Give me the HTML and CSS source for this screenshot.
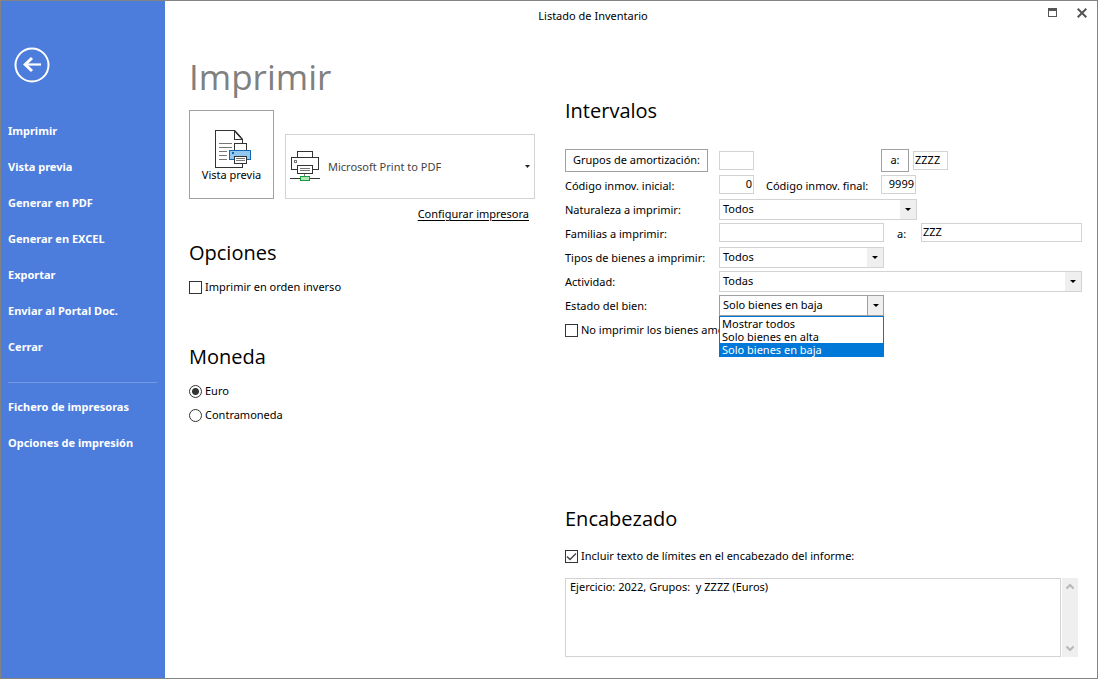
FILE: index.html
```html
<!DOCTYPE html>
<html lang="es">
<head>
<meta charset="utf-8">
<title>Listado de Inventario</title>
<link rel="stylesheet" href="styles.css">
</head>
<body>
<div class="window">
  <nav class="sidebar">
    <button class="back" aria-label="Volver">
      <svg width="36" height="36" viewBox="0 0 36 36" fill="none" stroke="#fff"><circle cx="18" cy="18" r="16.5" stroke-width="2"/><path d="M27 17.5H11" stroke-width="2.2"/><path d="M18 11l-6.8 6.5L18 24" stroke-width="3"/></svg>
    </button>
    <a class="nav-item" href="#">Imprimir</a>
    <a class="nav-item" href="#">Vista previa</a>
    <a class="nav-item" href="#">Generar en PDF</a>
    <a class="nav-item" href="#">Generar en EXCEL</a>
    <a class="nav-item" href="#">Exportar</a>
    <a class="nav-item" href="#">Enviar al Portal Doc.</a>
    <a class="nav-item" href="#">Cerrar</a>
    <hr class="nav-line">
    <a class="nav-item" href="#">Fichero de impresoras</a>
    <a class="nav-item" href="#">Opciones de impresión</a>
  </nav>
  <main class="main">
    <header class="titlebar">
      <span class="caption">Listado de Inventario</span>
      <div class="window-buttons">
        <button class="plain" aria-label="Maximizar"><svg width="9" height="9" viewBox="0 0 9 9" shape-rendering="crispEdges"><path d="M0 0h9v9H0zM1 3v5h7V3z" fill="#555" fill-rule="evenodd"/></svg></button>
        <button class="plain" aria-label="Cerrar ventana"><svg width="10" height="10" viewBox="0 0 10 10"><path d="M.7.7l8.6 8.6M9.3.7L.7 9.3" stroke="#555" stroke-width="2"/></svg></button>
      </div>
    </header>
    <div class="content">
      <section class="left">
        <h1 class="page-title">Imprimir</h1>
        <div class="printer-row">
          <button class="preview">
            <svg width="37" height="38" viewBox="0 0 37 38" fill="none" shape-rendering="crispEdges">
              <path d="M.5.5H19.5L27.5 9.500V37.500H.5z" fill="#fff" stroke="#333"/>
              <path d="M19.500.5V9.500H27.500" stroke="#333"/><path d="M19.500.5L27.500 9.500" stroke="#333" stroke-width="1.500" shape-rendering="auto"/>
              <path d="M4 13.500h13M4 17.500h13M4 21.500h8M4 25.500h8M4 29.500h8" stroke="#777"/>
              <path d="M19.500 13.500h12v7h-12z" fill="#fff" stroke="#333"/>
              <path d="M14.500 20.500h21v9h-21z" fill="#92c8f0" stroke="#1267b4"/>
              <path d="M17 22h2v2h-2z" fill="#1267b4"/>
              <path d="M19.500 26.500h12v7h-12z" fill="#fff" stroke="#333"/>
              <path d="M21 28.500h9M21 30.500h9" stroke="#777"/>
            </svg>
            <span>Vista previa</span>
          </button>
          <button class="printer">
            <svg width="30" height="31" viewBox="0 0 30 31" fill="none" shape-rendering="crispEdges">
              <path d="M7.500 7V.5h15V7" stroke="#333"/>
              <path d="M7 18.500H1.500v-12h27v12H23" stroke="#333"/>
              <path d="M4.500 9.500h2v2h-2z" stroke="#777"/>
              <path d="M7.500 14.500h15v8h-15z" fill="#fff" stroke="#333"/>
              <path d="M10 17.500h10M10 19.500h10" stroke="#777"/>
              <path d="M14.500 23v2" stroke="#777"/>
              <path d="M0 27.500h10M20 27.500h10" stroke="#333"/>
              <path d="M10.500 25.500h9v4h-9z" fill="#b3e3bd" stroke="#12a03c"/>
            </svg>
            <span class="printer-name">Microsoft Print to PDF</span>
            <svg width="5" height="3" viewBox="0 0 5 3"><path d="M0 0h5L2.500 3z" fill="#222"/></svg>
          </button>
        </div>
        <a class="configure" href="#">Configurar impresora</a>
        <h2 class="heading">Opciones</h2>
        <label class="check"><input type="checkbox" class="box">Imprimir en orden inverso</label>
        <h2 class="heading currency">Moneda</h2>
        <label class="check"><input type="radio" name="moneda" class="box round" checked>Euro</label>
        <label class="check"><input type="radio" name="moneda" class="box round">Contramoneda</label>
      </section>
      <section class="right">
        <h2 class="heading">Intervalos</h2>
        <div class="fields">
          <div class="row">
            <div class="group-cell"><button class="range">Grupos de amortización:</button></div>
            <input class="field short" aria-label="Grupo inicial">
            <button class="range to">a:</button>
            <input class="field short" value="ZZZZ" aria-label="Grupo final">
          </div>
          <div class="row">
            <label class="label-cell" for="ini">Código inmov. inicial:</label>
            <input class="field short number" id="ini" value="0">
            <label class="final-label" for="fin">Código inmov. final:</label>
            <input class="field short number" id="fin" value="9999">
          </div>
          <div class="row">
            <label class="label-cell" for="nat">Naturaleza a imprimir:</label>
            <div class="combo wide"><select id="nat"><option>Todos</option></select><span class="arrow"></span></div>
          </div>
          <div class="row">
            <label class="label-cell" for="fam">Familias a imprimir:</label>
            <input class="field medium" id="fam">
            <label class="family-to" for="famto">a:</label>
            <input class="field grow" id="famto" value="ZZZ">
          </div>
          <div class="row">
            <label class="label-cell" for="tipo">Tipos de bienes a imprimir:</label>
            <div class="combo medium"><select id="tipo"><option>Todos</option></select><span class="arrow"></span></div>
          </div>
          <div class="row">
            <label class="label-cell" for="act">Actividad:</label>
            <div class="combo grow"><select id="act"><option>Todas</option></select><span class="arrow"></span></div>
          </div>
          <div class="row">
            <label class="label-cell" for="est">Estado del bien:</label>
            <div class="combo medium open"><select id="est"><option>Solo bienes en baja</option></select><span class="arrow"></span>
              <ul class="list" role="listbox">
                <li role="option">Mostrar todos</li>
                <li role="option">Solo bienes en alta</li>
                <li role="option" class="selected" aria-selected="true">Solo bienes en baja</li>
              </ul>
            </div>
          </div>
          <label class="check"><input type="checkbox" class="box">No imprimir los bienes amo</label>
        </div>
        <div class="report">
          <h2 class="heading">Encabezado</h2>
          <label class="check"><input type="checkbox" class="box" checked>Incluir texto de límites en el encabezado del informe:</label>
          <div class="memo">
            <textarea class="memo-text" aria-label="Encabezado">Ejercicio: 2022, Grupos:  y ZZZZ (Euros)</textarea>
            <div class="scroll">
              <button class="plain" aria-label="Subir"><svg width="8" height="7" viewBox="0 0 8 7"><path d="M.5 5.500L4 2l3.500 3.500" fill="none" stroke="#b8b8b8" stroke-width="2"/></svg></button>
              <button class="plain" aria-label="Bajar"><svg width="8" height="7" viewBox="0 0 8 7"><path d="M.5 1.500L4 5l3.500-3.500" fill="none" stroke="#b8b8b8" stroke-width="2"/></svg></button>
            </div>
          </div>
        </div>
      </section>
    </div>
  </main>
</div>
</body>
</html>
```
FILE: styles.css
```css
* { box-sizing: border-box; }
body { margin: 0; }
body, button, input, select, textarea {
  font-family: "Noto Sans", "Open Sans", sans-serif;
  font-size: 11px;
  line-height: 16px;
  color: #000;
}
button { padding: 0; background: #fff; border: 0; }
.window {
  display: flex;
  min-height: 100vh;
  border: 1px solid #838383;
  background: #fff;
}
.sidebar {
  flex: 0 0 164px;
  display: flex;
  flex-direction: column;
  padding: 46px 8px 0 7px;
  background: #4c7ddc;
}
.back { width: 36px; height: 36px; margin: 0 0 39px 6px; background: none; }
.back svg { display: block; }
.nav-item {
  height: 36px;
  line-height: 18px;
  color: #fff;
  font-weight: 700;
  text-decoration: none;
  white-space: nowrap;
}
.nav-line { width: 100%; height: 1px; margin: 8px 0 15px; border: 0; background: #7498e2; }
.main { flex: 1; min-width: 0; display: flex; flex-direction: column; }
.titlebar { display: flex; align-items: flex-start; height: 30px; padding: 7px 10px 0 0; }
.caption { flex: 1; text-align: center; }
.window-buttons { display: flex; justify-content: flex-end; gap: 20px; width: 66px; }
.plain { display: flex; background: none; }
.content {
  flex: 1;
  display: grid;
  grid-template-columns: 346px minmax(0, 1fr);
  column-gap: 30px;
  padding: 0 15px 21px 24px;
}
.left { display: flex; flex-direction: column; }
.right { display: flex; flex-direction: column; }
.page-title {
  margin: 20px 0 0;
  font-size: 35px;
  line-height: 52px;
  font-family: "Open Sans", sans-serif;
  font-weight: 400;
  color: #808080;
}
.printer-row { display: flex; align-items: flex-end; gap: 11px; margin-top: 7px; }
.preview {
  width: 85px;
  height: 89px;
  border: 1px solid #a0a0a0;
  display: flex;
  flex-direction: column;
  align-items: center;
  padding-top: 19px;
}
.preview svg { flex: none; margin-left: 4px; }
.preview span { line-height: 14px; }
.printer {
  flex: 1;
  height: 65px;
  display: flex;
  align-items: center;
  gap: 8px;
  padding: 0 4px;
  border: 1px solid #d3d3d3;
}
.printer-name { flex: 1; text-align: left; color: #444; }
.configure { align-self: flex-end; margin: 7px 6px 0 0; color: #000; text-underline-offset: 2px; }
.heading { margin: 0; font-size: 20px; line-height: 28px; font-weight: 400; font-family: "Open Sans", sans-serif; }
.left .heading { margin-top: 17px; }
.left .currency { margin-top: 44px; }
.heading + .check { margin-top: 8px; }
.check { display: flex; align-items: center; gap: 3px; height: 24px; white-space: nowrap; }
.box {
  appearance: none;
  flex: none;
  width: 13px;
  height: 13px;
  margin: 0;
  border: 1px solid #333;
  background: #fff;
}
.box:checked {
  background: #fff url("data:image/svg+xml,%3Csvg xmlns='http://www.w3.org/2000/svg' viewBox='0 0 11 11'%3E%3Cpath d='M1 5.500l3 3L10 2.500' fill='none' stroke='%23444' stroke-width='1.400'/%3E%3C/svg%3E");
}
.round { border-radius: 50%; }
.round:checked { background: radial-gradient(circle, #333 0 3px, #fff 4px); }
.right > .heading { margin-top: 66px; }
.fields { margin-top: 23px; }
.row { display: flex; align-items: center; height: 24px; }
.group-cell { flex: none; width: 154px; }
.label-cell { flex: none; width: 154px; padding-top: 4px; }
.range { height: 23px; padding: 0 7px; border: 1px solid #a0a0a0; white-space: nowrap; }
.to { width: 28px; margin: 0 4px 0 127px; }
.field { height: 19px; padding: 0 1px 2px; border: 1px solid #d3d3d3; background: #fff; }
.short { width: 35px; }
.medium { width: 165px; }
.wide { width: 198px; }
.grow { flex: 1; min-width: 0; }
.number { text-align: right; }
.final-label { width: 127px; padding: 4px 0 0 12px; }
.family-to { width: 37px; padding: 4px 0 0 13px; }
.combo { position: relative; display: flex; height: 21px; margin-top: 2px; border: 1px solid #d3d3d3; }
.combo select { appearance: none; flex: 1; min-width: 0; padding: 0 3px; border: 0; background: #fff; }
.arrow { width: 16px; background: #efefef; display: flex; align-items: center; justify-content: center; pointer-events: none; }
.arrow::after { content: ""; border: 3px solid transparent; border-top-color: #000; border-bottom: 0; }
.open { border-color: #a0a0a0; }
.open .arrow { border-left: 1px solid #a0a0a0; }
.list {
  position: absolute;
  top: 20px;
  left: -1px;
  right: -1px;
  z-index: 1;
  margin: 0;
  padding: 0;
  list-style: none;
  border: 1px solid #0078d7;
  background: #fff;
}
.list li { padding: 0 2px; line-height: 13px; }
.list .selected { background: #0078d7; color: #fff; }
.fields .check { margin-top: 2px; }
.report { margin-top: auto; }
.report .check { margin-top: 11px; }
.memo { display: flex; gap: 1px; margin: 10px 4px 0 0; }
.memo-text { flex: 1; min-width: 0; height: 79px; padding: 0 4px; border: 1px solid #d3d3d3; resize: none; overflow: hidden; }
.scroll { width: 16px; display: flex; flex-direction: column; align-items: center; justify-content: space-between; padding: 5px 0; background: #efefef; }
```
